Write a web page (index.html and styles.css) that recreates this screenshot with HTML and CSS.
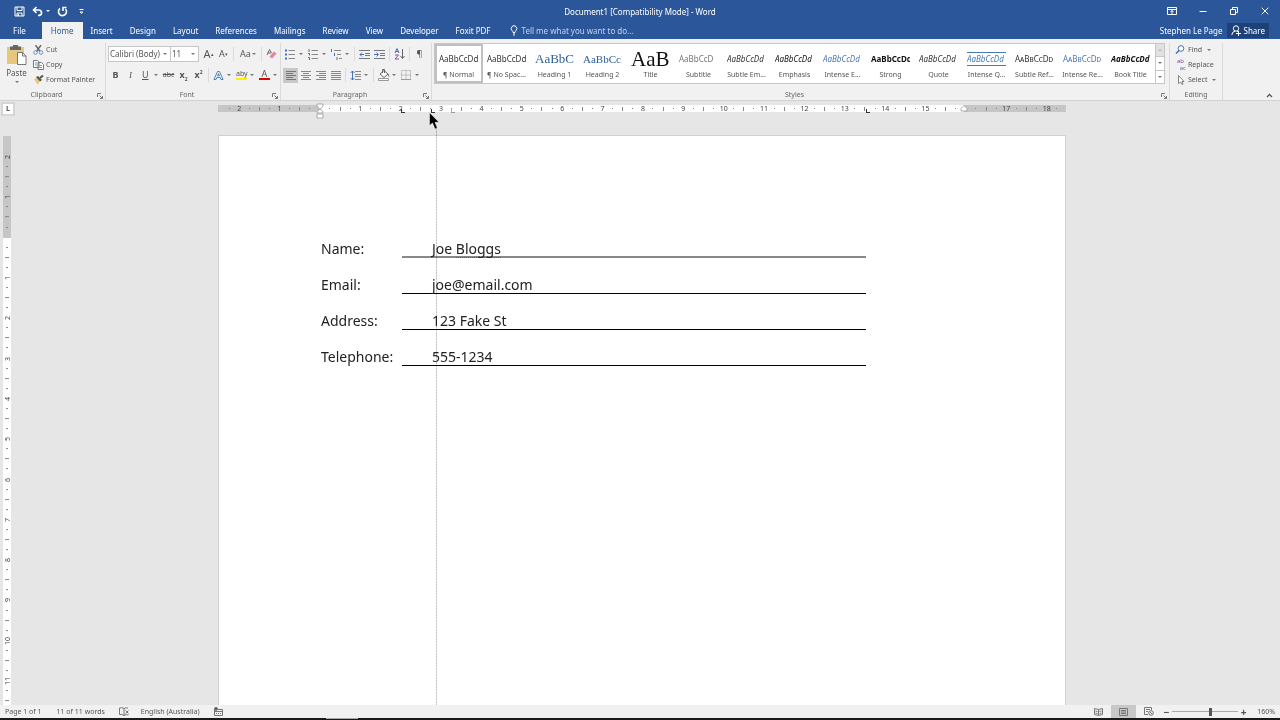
FILE: index.html
```
<!DOCTYPE html>
<html lang="en">
  <head>
    <meta charset="UTF-8" />
    <meta name="viewport" content="width=device-width, initial-scale=1.0" />
    <title>Document1 [Compatibility Mode] - Word</title>
    <link rel="stylesheet" href="styles.css">
  </head>

  <body>
    <header class="titlebar">
      <div class="quick">
        <button aria-label="Save"><svg width="11" height="11" viewBox="0 0 11 11"><path d="M1 1h9v9H1zM3 1v3.500h5V1M3 10V7h5v3M4.500 8v2" /></svg></button>
        <button aria-label="Undo"><svg width="11" height="11" viewBox="0 0 11 11"><path class="thick" d="M4.500 1L1.500 4l3 3M2 4h5q3 .5 2.500 3.500Q9 9.500 6 9.500" /></svg><i class="caret"></i></button>
        <button aria-label="Redo"><svg width="11" height="11" viewBox="0 0 11 11"><path class="thick" d="M3 2.500A4 4 0 1 0 8.500 3M9.500 1.500H6V5" /></svg></button>
        <button aria-label="Customize toolbar"><svg width="7" height="7" viewBox="0 0 7 7"><path d="M1.500 1.500h4M2 4l1.500 1.500L5 4z" /></svg></button>
      </div>
      <h1>Document1 [Compatibility Mode] - Word</h1>
      <div class="win-btns">
        <button aria-label="Ribbon display"><svg width="10" height="8" viewBox="0 0 10 8"><path d="M.5.5h9v7h-9zM.5 2.500h9M5 7V3.500M3.500 5L5 3.500 6.500 5" /></svg></button>
        <button aria-label="Minimize"><svg width="8" height="8" viewBox="0 0 8 8"><path d="M.5 4.500h7" /></svg></button>
        <button aria-label="Restore"><svg width="8" height="8" viewBox="0 0 8 8"><path d="M.5 2.500h5v5h-5zM2.500 2.500v-2h5v5h-2" /></svg></button>
        <button aria-label="Close"><svg width="8" height="8" viewBox="0 0 8 8"><path d="M.7.7l6.600 6.600M7.300.7L.7 7.300" /></svg></button>
      </div>
    </header>

    <nav class="tabs">
      <button class="file">File</button>
      <button class="active">Home</button>
      <button>Insert</button>
      <button>Design</button>
      <button>Layout</button>
      <button>References</button>
      <button>Mailings</button>
      <button>Review</button>
      <button>View</button>
      <button>Developer</button>
      <button>Foxit PDF</button>
      <button class="tell"><svg width="8" height="11" viewBox="0 0 8 11"><path d="M3 7.500Q3 6.500 2 5.500A2.800 2.800 0 1 1 6 5.500Q5 6.500 5 7.500zM3 9h2M3.500 10.300h1" /></svg>Tell me what you want to do...</button>
      <span class="user">Stephen Le Page</span>
      <button class="share"><svg width="10" height="11" viewBox="0 0 10 11"><circle cx="5" cy="3.500" r="2.700" /><path d="M.8 10Q1 6.500 4 6.300M6 6.200L7 7M5 8.500h5M7.500 6v5" /></svg>Share</button>
    </nav>

    <section class="ribbon">
      <div class="group clipboard">
        <div class="group-body">
          <button class="paste">
            <svg width="20" height="20" viewBox="0 0 20 20">
              <rect x="0" y="2" width="17" height="17" fill="#e8c77d" />
              <path d="M3 1.500h3V0h5v1.500h3V5H3z" fill="#666" />
              <path d="M10.500 7.500h5l3.500 3.500v8.500h-8.500z" fill="#fff" stroke="#777" />
              <path d="M15.500 7.500V11H19" fill="none" stroke="#777" />
            </svg>
            Paste
            <i class="caret"></i>
          </button>
          <div class="stack">
            <button><svg width="11" height="10" viewBox="0 0 11 10"><path d="M2.500 0L7 6.500M8 0L3.500 6.500" fill="none" stroke="#666" stroke-width="1.400" /><circle cx="2.500" cy="7.500" r="1.800" fill="none" stroke="#6b93c9" /><circle cx="8" cy="7.500" r="1.800" fill="none" stroke="#6b93c9" /></svg>Cut</button>
            <button><svg width="11" height="10" viewBox="0 0 11 10"><path d="M.5.5h4l1.500 1.500v5.500H.5zM5 2.500h3.500l2 2v5H5z" fill="#fff" stroke="#777" /><path d="M2 3h2M2 5h2M6.500 5.500H9M6.500 7.500H9" stroke="#6b93c9" /></svg>Copy</button>
            <button><svg width="11" height="10" viewBox="0 0 11 10"><path d="M1 4l3-1.500 3 3L5 9.500 3.500 8z" fill="#e8c77d" /><path d="M3 2l2-1 4 4-2 1.500z" fill="#555" /><path d="M7 3l3-2.500" stroke="#555" stroke-width="2" /></svg>Format Painter</button>
          </div>
        </div>
        <div class="group-name">Clipboard<svg class="launch" width="6" height="6" viewBox="0 0 6 6"><path d="M.5 4V.5H4M2.500 2.500l3 3M5.500 3v2.500H3" /></svg></div>
      </div>

      <div class="group font">
        <div class="group-body rows">
          <div class="row">
            <span class="pick family"><select aria-label="Font"><option>Calibri (Body)</option></select></span>
            <span class="pick size"><select aria-label="Font size"><option>11</option></select></span>
            <button class="tool grow" aria-label="Grow font">A<sup>▴</sup></button>
            <button class="tool shrink" aria-label="Shrink font">A<sup>▾</sup></button>
            <span class="sep"></span>
            <button class="tool drop" aria-label="Change case"><span class="case">Aa</span><i class="caret"></i></button>
            <span class="sep"></span>
            <button class="tool" aria-label="Clear formatting"><svg width="11" height="11" viewBox="0 0 11 11"><path d="M1 6L3.500.5 5.500 4M2 4h3" fill="none" stroke="#666" /><path d="M3.500 7.500L8 2.500l2.500 2L6 9.500z" fill="#e8829b" /></svg></button>
          </div>
          <div class="row">
            <button class="tool"><b>B</b></button>
            <button class="tool serif"><em>I</em></button>
            <button class="tool drop"><u>U</u><i class="caret"></i></button>
            <button class="tool strike"><s>abc</s></button>
            <button class="tool"><b>x<sub>2</sub></b></button>
            <button class="tool"><b>x<sup>2</sup></b></button>
            <span class="sep"></span>
            <button class="tool drop" aria-label="Text effects"><svg width="11" height="11" viewBox="0 0 11 11"><path d="M1 9.500L4.500 1.500h2L10 9.500H8L7.200 7.500H3.800L3 9.500zM4.500 5.800h2L5.500 3.500z" fill="#fff" stroke="#4a7fc4" /></svg><i class="caret"></i></button>
            <button class="tool drop" aria-label="Highlight"><span class="mark yellow">aby</span><i class="caret"></i></button>
            <button class="tool drop" aria-label="Font colour"><span class="mark red">A</span><i class="caret"></i></button>
          </div>
        </div>
        <div class="group-name">Font<svg class="launch" width="6" height="6" viewBox="0 0 6 6"><path d="M.5 4V.5H4M2.500 2.500l3 3M5.500 3v2.500H3" /></svg></div>
      </div>

      <div class="group paragraph">
        <div class="group-body rows">
          <div class="row">
            <button class="tool drop" aria-label="Bullets"><svg width="11" height="11" viewBox="0 0 11 11"><path d="M3.500 1.500H10M3.500 5.500H10M3.500 9.500H10" stroke="#888" /><path d="M0 1.500h2M0 5.500h2M0 9.500h2" stroke="#4472b8" stroke-width="2" /></svg><i class="caret"></i></button>
            <button class="tool drop" aria-label="Numbering"><svg width="11" height="11" viewBox="0 0 11 11"><path d="M3.500 1.500H10M3.500 5.500H10M3.500 9.500H10" stroke="#888" /><path d="M1 0v3M0 4.500h1.500v2M0 8.500h1.500V11" fill="none" stroke="#4472b8" /></svg><i class="caret"></i></button>
            <button class="tool drop" aria-label="Multilevel list"><svg width="11" height="11" viewBox="0 0 11 11"><path d="M3 1.500h7M6 5.500h4M8 9.500h3" stroke="#888" /><path d="M.5 0v3M3.500 4v3M6 8v3" stroke="#4472b8" /></svg><i class="caret"></i></button>
            <span class="sep"></span>
            <button class="tool" aria-label="Decrease indent"><svg width="11" height="11" viewBox="0 0 11 11"><path d="M0 1.500h11M6 4.500h5M6 6.500h5M0 9.500h11" stroke="#777" /><path d="M5 5.500H1M3 3.500l-2 2 2 2" fill="none" stroke="#4472b8" /></svg></button>
            <button class="tool" aria-label="Increase indent"><svg width="11" height="11" viewBox="0 0 11 11"><path d="M0 1.500h11M6 4.500h5M6 6.500h5M0 9.500h11" stroke="#777" /><path d="M0 5.500h4M2.500 3.500l2 2-2 2" fill="none" stroke="#4472b8" /></svg></button>
            <span class="sep"></span>
            <button class="tool" aria-label="Sort"><svg width="11" height="12" viewBox="0 0 11 12"><path d="M1 5L3 .5 5 5M1.500 3.500h3" fill="none" stroke="#4472b8" /><path d="M1 7h3.500L1 11h4" fill="none" stroke="#8a4f9e" /><path d="M8.500 1v9M6.500 8l2 2.500 2-2.500" fill="none" stroke="#666" /></svg></button>
            <span class="sep"></span>
            <button class="tool" aria-label="Show marks">¶</button>
          </div>
          <div class="row">
            <button class="tool on" aria-label="Align left"><svg width="10" height="9" viewBox="0 0 10 9"><path d="M0 .5h10M0 2.500h7M0 4.500h10M0 6.500h7M0 8.500h10" stroke="#777" /></svg></button>
            <button class="tool" aria-label="Center"><svg width="10" height="9" viewBox="0 0 10 9"><path d="M0 .5h10M2 2.500h6M0 4.500h10M2 6.500h6M0 8.500h10" stroke="#888" /></svg></button>
            <button class="tool" aria-label="Align right"><svg width="10" height="9" viewBox="0 0 10 9"><path d="M0 .5h10M3 2.500h7M0 4.500h10M3 6.500h7M0 8.500h10" stroke="#888" /></svg></button>
            <button class="tool" aria-label="Justify"><svg width="10" height="9" viewBox="0 0 10 9"><path d="M0 .5h10M0 2.500h10M0 4.500h10M0 6.500h10M0 8.500h10" stroke="#888" /></svg></button>
            <span class="sep"></span>
            <button class="tool drop" aria-label="Line spacing"><svg width="11" height="11" viewBox="0 0 11 11"><path d="M5 1.500h6M5 4.500h6M5 6.500h6M5 9.500h6" stroke="#888" /><path d="M2.500 1v9M.5 3l2-2 2 2M.5 8l2 2 2-2" fill="none" stroke="#4472b8" /></svg><i class="caret"></i></button>
            <span class="sep"></span>
            <button class="tool drop" aria-label="Shading"><svg width="12" height="12" viewBox="0 0 12 12"><path d="M2 5l4-3.500L10 5 6 8.500zM4.500 4V.5h2V4M10 5l1 2.500" fill="#fff" stroke="#666" /><path d="M.5 9.500h10v2H.5z" fill="#fff" stroke="#999" /></svg><i class="caret"></i></button>
            <button class="tool drop" aria-label="Borders"><svg width="10" height="10" viewBox="0 0 10 10"><path d="M.5.5h9v9h-9zM5 .5v9M.5 5h9" fill="none" stroke="#999" stroke-dasharray="1 1" /><path d="M0 9.500h10" stroke="#999" /></svg><i class="caret"></i></button>
          </div>
        </div>
        <div class="group-name">Paragraph<svg class="launch" width="6" height="6" viewBox="0 0 6 6"><path d="M.5 4V.5H4M2.500 2.500l3 3M5.500 3v2.500H3" /></svg></div>
      </div>

      <div class="group styles">
        <div class="gallery">
          <button class="selected"><span class="sample">AaBbCcDd</span>¶ Normal</button>
          <button><span class="sample">AaBbCcDd</span>¶ No Spac...</button>
          <button><span class="sample h1">AaBbC</span>Heading 1</button>
          <button><span class="sample h2">AaBbCcI</span>Heading 2</button>
          <button><span class="sample title">AaB</span>Title</button>
          <button><span class="sample subtitle">AaBbCcD</span>Subtitle</button>
          <button><span class="sample italic">AaBbCcDd</span>Subtle Em...</button>
          <button><span class="sample italic dark">AaBbCcDd</span>Emphasis</button>
          <button><span class="sample italic blue">AaBbCcDd</span>Intense E...</button>
          <button><span class="sample bold">AaBbCcDd</span>Strong</button>
          <button><span class="sample italic">AaBbCcDd</span>Quote</button>
          <button><span class="sample italic blue lined">AaBbCcDd</span>Intense Q...</button>
          <button><span class="sample caps">AaBbCcDd</span>Subtle Ref...</button>
          <button><span class="sample caps blue">AaBbCcDd</span>Intense Re...</button>
          <button><span class="sample italic bold">AaBbCcDd</span>Book Title</button>
          <div class="scroller">
            <button aria-label="Up" disabled><i class="caret up"></i></button>
            <button aria-label="Down"><i class="caret"></i></button>
            <button aria-label="More styles"><i class="caret bar"></i></button>
          </div>
        </div>
        <div class="group-name">Styles<svg class="launch" width="6" height="6" viewBox="0 0 6 6"><path d="M.5 4V.5H4M2.500 2.500l3 3M5.500 3v2.500H3" /></svg></div>
      </div>

      <div class="group editing">
        <div class="group-body">
          <div class="stack">
            <button><svg width="11" height="10" viewBox="0 0 11 10"><circle cx="6" cy="3.500" r="2.800" fill="#fff" stroke="#4472b8" /><path d="M4 5.500L1 8.500" stroke="#4472b8" stroke-width="1.600" /></svg>Find<i class="caret"></i></button>
            <button><span class="swap"><span>ab</span><span class="to">ac</span></span>Replace</button>
            <button><svg width="11" height="10" viewBox="0 0 11 10"><path d="M3.500.5v8l2-1.500L7 9.500l1-.5-1-2.500h2z" fill="#fff" stroke="#666" stroke-width=".8" /></svg>Select<i class="caret"></i></button>
          </div>
        </div>
        <div class="group-name">Editing</div>
      </div>
      <button class="collapse" aria-label="Collapse ribbon"><svg width="7" height="5" viewBox="0 0 7 5"><path d="M1 4l2.500-2.500L6 4" fill="none" stroke="#555" stroke-width="1.300" /></svg></button>
    </section>

    <main class="workspace">
      <div class="side">
        <button class="tab-kind" aria-label="Tab stop">L</button>
        <div class="v-ruler"></div>
      </div>
      <div class="canvas">
        <div class="h-ruler">
          <svg class="stop indent" width="8" height="16" viewBox="0 0 8 16"><path d="M1 1h6v2L4 6.500 1 3zM1 10V8.500L4 6l3 2.500V10zM1 11h6v4H1z" /></svg>
          <i class="stop tab-a"></i>
          <i class="stop tab-b"></i>
          <i class="stop tab-c"></i>
          <i class="stop tab-d"></i>
          <svg class="stop right" width="8" height="7" viewBox="0 0 8 7"><path d="M1 6V3.500l3-3 3 3V6z" /></svg>
        </div>
        <article class="paper">
          <div class="line first"><span>Name:</span><span class="value">Joe <span class="typo">Bloggs</span></span></div>
          <div class="line"><span>Email:</span><span class="value">joe@email.com</span></div>
          <div class="line"><span>Address:</span><span class="value">123 Fake St</span></div>
          <div class="line"><span>Telephone:</span><span class="value">555-1234</span></div>
        </article>
        <div class="guide"></div>
        <svg class="pointer" width="11" height="18" viewBox="0 0 11 18"><path d="M.5.5v13l3-2.500 2.500 6 2.300-1L6 10.300h4z" /></svg>
      </div>
    </main>

    <footer class="status">
      <span class="page-no">Page 1 of 1</span>
      <span class="words">11 of 11 words</span>
      <svg class="proof" width="10" height="9" viewBox="0 0 10 9"><path d="M5 1.500Q3 0 .5 1v6.500Q3 7 5 8.500V1.500Q6.500.5 9 1M5 8.500Q7 7 9.500 8M6.500 3.500l3 3M9.500 3.500l-3 3" /></svg>
      <span class="lang">English (Australia)</span>
      <svg width="9" height="9" viewBox="0 0 9 9"><path d="M.5 2.500h8v6h-8zM.5 4.500h8M2 6.500h1M4 6.500h1M6 6.500h1" /><circle cx="2" cy="1.800" r="1.500" fill="#555" /></svg>
      <div class="views">
        <button aria-label="Read mode"><svg width="9" height="8" viewBox="0 0 9 8"><path d="M4.500 1.500L.5.500v6l4 1 4-1v-6zv6M1.500 3l2 .5M1.500 5l2 .5M7.500 3l-2 .5M7.500 5l-2 .5" /></svg></button>
        <button class="on" aria-label="Print layout"><svg width="9" height="8" viewBox="0 0 9 8"><path d="M.5.500h8v7h-8zM2 2.500h5M2 4h5M2 5.500h5" /></svg></button>
        <button aria-label="Web layout"><svg width="10" height="9" viewBox="0 0 10 9"><path d="M4 7.500H.5v-7h7V3M2 2.500h4M2 4.500h2" /><circle cx="7" cy="6" r="2.300" /><path d="M5.500 4.500l3 3" /></svg></button>
      </div>
      <button class="step" aria-label="Zoom out">−</button>
      <input type="range" class="zoom" aria-label="Zoom" min="0" max="100" value="58" />
      <button class="step" aria-label="Zoom in">+</button>
      <span class="percent">160%</span>
    </footer>
    <div class="edge"><span></span></div>

    <script>
      // four marks per centimetre: number, dot, half mark, dot
      function fillRuler(selector, first, last) {
        const ruler = document.querySelector(selector);
        for (let i = first; i <= last; i++) {
          const mark = document.createElement("span");
          mark.className = "mark-cell";
          const cm = Math.abs(i / 4);
          if (i === 0 || i === 64) mark.textContent = "";
          else if (i % 4 === 0) mark.textContent = cm;
          else mark.classList.add(i % 2 === 0 ? "half" : "dot");
          ruler.appendChild(mark);
        }
      }
      fillRuler(".h-ruler", -9, 73);
      fillRuler(".v-ruler", -8, 47);
    </script>
  </body>
</html>
```
FILE: styles.css
```
* {
  box-sizing: border-box;
}

body {
  margin: 0;
  height: 100vh;
  display: flex;
  flex-direction: column;
  overflow: hidden;
  background-color: #e6e6e6;
  color: #555;
  font-family: "Noto Sans", "Open Sans", sans-serif;
  font-size: 7px;
  line-height: 10px;
}

button,
select {
  font: inherit;
  color: inherit;
  background: none;
  border: none;
  padding: 0;
  margin: 0;
  white-space: nowrap;
}

svg {
  display: block;
  flex: none;
}

.caret {
  flex: none;
  border: 2px solid transparent;
  border-top-color: #777;
  border-bottom: none;
}

.caret.up {
  transform: rotate(180deg);
  opacity: 0.4;
}

.caret.bar {
  box-shadow: 0 -4px 0 -1px #777;
}

/* title bar */
.titlebar {
  display: grid;
  grid-template-columns: 1fr auto 1fr;
  align-items: center;
  height: 22px;
  flex: none;
  background-color: #2b579a;
  color: white;
}

.titlebar h1 {
  margin: 0;
  font-size: 8px;
  font-weight: 400;
  padding-top: 2px;
}

.titlebar svg,
.tabs svg {
  fill: none;
  stroke: white;
}

.titlebar .thick {
  stroke-width: 1.6;
}

.quick {
  display: flex;
  align-items: center;
  gap: 7px;
  padding-left: 14px;
}

.quick button {
  display: flex;
  align-items: center;
  gap: 3px;
}

.quick button:last-child {
  margin-left: 3px;
}

.quick .caret {
  border-top-color: white;
}

.win-btns {
  display: flex;
  justify-content: flex-end;
  align-items: center;
}

.win-btns button {
  width: 31px;
  display: flex;
  justify-content: center;
}

/* tabs */
.tabs {
  display: flex;
  align-items: stretch;
  height: 17px;
  flex: none;
  background-color: #2b579a;
  color: white;
  font-size: 8px;
}

.tabs button {
  padding: 0 9px 0 8px;
}

.tabs .file {
  padding: 0 16px 0 13px;
}

.tabs .active {
  padding: 0 9px;
  background-color: #f1f1f1;
  color: #2b579a;
}

.tabs .tell {
  display: flex;
  align-items: center;
  gap: 4px;
  padding: 0 10px;
  color: #c3d2ea;
}

.user {
  margin-left: auto;
  align-self: center;
  padding-right: 4px;
}

.tabs .share {
  display: flex;
  align-items: center;
  gap: 3px;
  padding: 0 4px;
  margin: 1px 11px 1px 0;
  background-color: #1e4278;
}

/* ribbon */
.ribbon {
  display: flex;
  height: 62px;
  flex: none;
  background-color: #f1f1f1;
  border-bottom: 1px solid #d2d2d2;
}

.group {
  display: flex;
  flex-direction: column;
  justify-content: space-between;
  margin-top: 4px;
  border-right: 1px solid #dadada;
}

.group-body {
  display: flex;
}

.group-name {
  position: relative;
  text-align: center;
  color: #666;
  padding-right: 12px;
}

.launch {
  position: absolute;
  right: 2px;
  top: 3px;
  fill: none;
  stroke: #777;
}

.clipboard {
  width: 106px;
}

.font {
  width: 175px;
}

.paragraph {
  width: 151px;
}

.styles {
  flex: 1;
  min-width: 0;
}

.editing {
  width: 53px;
}

.editing .group-name {
  padding-right: 0;
}

.paste {
  display: flex;
  flex-direction: column;
  align-items: center;
  width: 33px;
  padding-top: 2px;
  gap: 3px;
  font-size: 8px;
}

.stack {
  display: flex;
  flex-direction: column;
  gap: 1px;
}

.stack button {
  display: flex;
  align-items: center;
  gap: 2px;
  height: 14px;
}

.stack .caret {
  margin-left: 3px;
}

.rows {
  flex-direction: column;
  gap: 5px;
  padding: 3px 0 0 2px;
}

.row {
  display: flex;
  align-items: center;
  height: 16px;
}

.tool {
  width: 15px;
  height: 15px;
  display: flex;
  align-items: center;
  justify-content: center;
  font-size: 9px;
}

.tool.drop {
  width: 23px;
  justify-content: space-between;
  padding: 0 3px 0 2px;
}

.tool.drop u,
.tool.drop .case {
  padding-left: 2px;
}

.tool.on {
  background-color: #c8c8c8;
}

.tool.serif {
  font-family: "Liberation Serif", serif;
}

.tool sup,
.tool sub {
  font-size: 5px;
  line-height: 0;
}

.tool.grow {
  font-size: 11px;
}

.tool.strike {
  font-size: 7px;
}

.sep {
  width: 1px;
  height: 14px;
  margin: 0 2px;
  background-color: #dadada;
}

.mark {
  width: 11px;
  font-size: 7px;
  line-height: 8px;
  text-align: center;
  border-bottom: 2px solid;
}

.mark.yellow {
  border-color: #fff000;
}

.mark.red {
  font-size: 9px;
  border-color: #e00000;
}

.pick {
  display: grid;
  align-items: center;
  height: 16px;
  background-color: white;
  border: 1px solid #c6c6c6;
}

.pick select,
.pick::after {
  grid-area: 1 / 1;
}

.pick select {
  appearance: none;
  width: 100%;
  font-size: 8px;
  padding-left: 1px;
}

.pick::after {
  content: "";
  justify-self: end;
  margin-right: 3px;
  pointer-events: none;
  border: 2px solid transparent;
  border-top-color: #777;
  border-bottom: none;
}

.family {
  width: 63px;
}

.size {
  width: 28px;
  border-left: none;
  margin-right: 2px;
}

/* style gallery */
.gallery {
  display: grid;
  grid-template-columns: repeat(15, minmax(0, 1fr)) 9px;
  height: 41px;
  margin: 0 4px 0 2px;
  background-color: white;
  border: 1px solid #c6c6c6;
}

.gallery > button {
  display: flex;
  flex-direction: column;
  align-items: center;
  justify-content: flex-end;
  overflow: hidden;
  padding: 0 4px 2px 3px;
  border: 1px solid transparent;
}

.gallery > button.selected {
  padding: 0 3px 1px 2px;
  border: 2px solid #c0c0c0;
}

.sample {
  width: 100%;
  height: 21px;
  overflow: hidden;
  text-align: left;
  line-height: 20px;
  font-size: 8px;
  color: #333;
}

.sample.h1,
.sample.h2,
.sample.title {
  font-family: "Liberation Serif", serif;
}

.sample.h1 {
  font-size: 13px;
  color: #2e6098;
}

.sample.h2 {
  font-size: 11px;
  color: #2e6098;
}

.sample.title {
  font-size: 21px;
  color: #111;
}

.sample.subtitle {
  color: #777;
}

.sample.italic {
  font-style: italic;
}

.sample.dark {
  color: #111;
}

.sample.bold {
  font-weight: 700;
  color: #111;
}

.sample.caps {
  font-variant: small-caps;
}

.sample.blue {
  color: #4a7ab5;
}

.sample.lined {
  height: 14px;
  line-height: 12px;
  margin-bottom: 4px;
  border-top: 1px solid #4a7ab5;
  border-bottom: 1px solid #4a7ab5;
}

.scroller {
  display: grid;
  border-left: 1px solid #c6c6c6;
}

.scroller button {
  display: flex;
  align-items: center;
  justify-content: center;
}

.scroller button + button {
  border-top: 1px solid #c6c6c6;
}

.scroller button:disabled {
  background-color: #e1e1e1;
}

.editing .stack {
  padding-left: 5px;
}

.swap {
  display: flex;
  flex-direction: column;
  width: 11px;
  font-size: 6px;
  line-height: 7px;
  color: #7b4a94;
}

.swap .to {
  align-self: flex-end;
  color: #4472b8;
}

.collapse {
  width: 57px;
  display: flex;
  align-items: flex-end;
  justify-content: flex-end;
  padding: 0 7px 2px 0;
}

/* document area */
.workspace {
  flex: 1;
  min-height: 0;
  display: flex;
  padding-right: 11px;
}

.side {
  display: flex;
  flex-direction: column;
  width: 15px;
}

.tab-kind {
  width: 14px;
  height: 14px;
  flex: none;
  margin: 1px 0 0 1px;
  background-color: white;
  border: 2px solid #d6d6d6;
  font-weight: 700;
  line-height: 10px;
}

.v-ruler {
  flex: 1;
  min-height: 0;
  width: 8px;
  margin: 20px 0 0 3px;
  padding-top: 16px;
  overflow: hidden;
  background: linear-gradient(#c6c6c6 102px, white 102px);
}

.mark-cell {
  flex: 1;
  display: flex;
  align-items: center;
  justify-content: center;
  min-width: 0;
  font-size: 7px;
  line-height: 7px;
  color: #444;
}

.v-ruler .mark-cell {
  width: 8px;
  height: calc(121px / 12);
  writing-mode: vertical-rl;
  transform: rotate(180deg);
}

.half::after,
.dot::after {
  content: "";
  width: 1px;
  height: 4px;
  background-color: #888;
}

.dot::after {
  height: 1px;
}

.v-ruler .half::after {
  width: 4px;
  height: 1px;
}

.v-ruler .dot::after {
  width: 2px;
}

.canvas {
  position: relative;
  width: 848px;
  margin: 0 auto;
  display: flex;
  flex-direction: column;
}

.h-ruler {
  position: relative;
  display: flex;
  flex: none;
  height: 7px;
  margin: 4px 0 23px;
  padding: 0 4px 0 6px;
  background: linear-gradient(to right, #c6c6c6 102px, white 102px, white 746px, #c6c6c6 746px);
}

/* markers that hang over the ruler */
.stop {
  position: absolute;
}

i.stop {
  top: 4px;
  width: 4px;
  height: 4px;
  border-left: 1px solid #333;
  border-bottom: 1px solid #333;
}

svg.stop {
  fill: white;
  stroke: #999;
  stroke-width: 0.8;
}

.indent {
  left: 98px;
  top: -2px;
}

.tab-a {
  left: 183px;
}

.tab-b {
  left: 213px;
}

.tab-c {
  left: 233px;
  opacity: 0.4;
}

.tab-d {
  left: 648px;
}

.right {
  left: 742px;
}

.paper {
  flex: 1;
  min-height: 0;
  padding: 104px 199px 0 102px;
  background-color: white;
  border: 1px solid #d0d0d0;
  border-bottom: none;
  color: #222;
  font-size: 14px;
  line-height: 18px;
}

.line {
  display: grid;
  grid-template-columns: 81px 1fr;
  margin-bottom: 18px;
}

.value {
  height: 18px;
  padding-left: 30px;
  border-bottom: 1px solid #000;
}

.first .value {
  border-bottom: 2px solid #888;
}

.typo {
  display: inline-block;
  height: 18px;
  border-bottom: 1px dotted #e02020;
}

.guide {
  position: absolute;
  left: 218px;
  top: 24px;
  bottom: 0;
  width: 1px;
  background: repeating-linear-gradient(#c4c4c4 0 2px, #e6e6e6 2px 3px);
  mix-blend-mode: multiply;
}

.pointer {
  position: absolute;
  left: 211px;
  top: 11px;
  stroke: white;
  stroke-width: 0.5;
}

/* status bar */
.status {
  display: flex;
  align-items: center;
  height: 13px;
  flex: none;
  padding: 0 5px;
  background-color: #f1f1f1;
}

.status svg {
  fill: none;
  stroke: #777;
}

.words {
  margin-left: 15px;
}

.proof {
  margin: 0 12px 0 14px;
}

.lang {
  margin-right: 14px;
}

.views {
  display: flex;
  align-self: stretch;
  margin-left: auto;
}

.views button {
  width: 25px;
  display: flex;
  align-items: center;
  justify-content: center;
}

.views .on {
  background-color: #c8c8c8;
}

.step {
  width: 11px;
  font-size: 10px;
  font-weight: 700;
}

.zoom {
  appearance: none;
  width: 66px;
  height: 9px;
  margin: 0;
  background: linear-gradient(#aaa, #aaa) center / 100% 1px no-repeat;
}

.zoom::-webkit-slider-thumb {
  appearance: none;
  width: 3px;
  height: 8px;
  background-color: #555;
}

.percent {
  margin-left: 8px;
}

.edge {
  height: 2px;
  flex: none;
  background-color: #1a1a1a;
}

.edge span {
  display: block;
  width: 32px;
  height: 1px;
  margin-left: 326px;
  background-color: #aaa;
}
```
